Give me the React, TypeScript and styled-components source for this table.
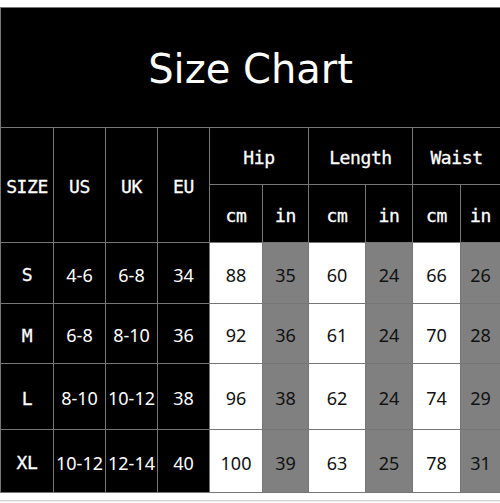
import React from "react";
import styled, { createGlobalStyle } from "styled-components";

const GlobalStyle = createGlobalStyle`
  html, body { margin: 0; padding: 0; background: #ffffff; }
  body { font-family: "DejaVu Sans", sans-serif; }
`;

const Page = styled.div`
  width: 500px;
  height: 503px;
  overflow: hidden;
  background: #ffffff;
  display: flex;
  flex-direction: column;
  padding-top: 7px;
  box-sizing: border-box;
`;

const Chart = styled.div`
  display: grid;
  grid-template-columns: 52px 51px 51px 51px 52px 45px 56px 46px 47px 39px;
  grid-template-rows: 119px 56px 57px 60px 59px 65px 62px;
  gap: 1px;
  padding: 1px 0 1px 1px;
  background: #767676;
  width: 500px;
  box-sizing: border-box;
`;

const Title = styled.div`
  grid-column: 1 / -1;
  background: #000;
  color: #fff;
  font-family: "DejaVu Sans", Verdana, sans-serif;
  font-size: 40px;
  display: flex;
  align-items: center;
  justify-content: center;
  padding-top: 2px;
`;

type Tone = "black" | "white" | "gray";

const Cell = styled.div<{ $tone?: Tone; $span?: number; $rows?: number; $mono?: boolean }>`
  display: flex;
  align-items: center;
  justify-content: center;
  white-space: nowrap;
  overflow: visible;
  padding-top: 3px;
  grid-column: span ${(p) => p.$span ?? 1};
  grid-row: span ${(p) => p.$rows ?? 1};
  background: ${(p) => (p.$tone === "white" ? "#ffffff" : p.$tone === "gray" ? "#808080" : "#000000")};
  color: ${(p) => (p.$tone === "white" || p.$tone === "gray" ? "#111111" : "#ffffff")};
  font-family: ${(p) => (p.$mono ? '"DejaVu Sans Mono", "Liberation Mono", monospace' : '"Noto Sans", sans-serif')};
  font-size: 18px;
  letter-spacing: ${(p) => (p.$mono ? "-0.4px" : "0")};
  -webkit-text-stroke: ${(p) => (p.$mono ? "0.3px #ffffff" : "0")};
`;

const Footer = styled.div`
  height: 7px;
  border-bottom: 1px solid #d4d4d4;
  box-shadow: 0 1px 1px #ececec;
`;

const rows = [
  { size: "S", us: "4-6", uk: "6-8", eu: "34", v: ["88", "35", "60", "24", "66", "26"] },
  { size: "M", us: "6-8", uk: "8-10", eu: "36", v: ["92", "36", "61", "24", "70", "28"] },
  { size: "L", us: "8-10", uk: "10-12", eu: "38", v: ["96", "38", "62", "24", "74", "29"] },
  { size: "XL", us: "10-12", uk: "12-14", eu: "40", v: ["100", "39", "63", "25", "78", "31"] },
];

export default function App() {
  return (
    <>
      <GlobalStyle />
      <Page>
        <Chart>
          <Title>Size Chart</Title>
          <Cell $mono $rows={2}>SIZE</Cell>
          <Cell $mono $rows={2}>US</Cell>
          <Cell $mono $rows={2}>UK</Cell>
          <Cell $mono $rows={2}>EU</Cell>
          <Cell $mono $span={2}>Hip</Cell>
          <Cell $mono $span={2}>Length</Cell>
          <Cell $mono $span={2}>Waist</Cell>
          <Cell $mono>cm</Cell>
          <Cell $mono>in</Cell>
          <Cell $mono>cm</Cell>
          <Cell $mono>in</Cell>
          <Cell $mono>cm</Cell>
          <Cell $mono>in</Cell>
          {rows.map((r) => (
            <React.Fragment key={r.size}>
              <Cell $mono>{r.size}</Cell>
              <Cell>{r.us}</Cell>
              <Cell>{r.uk}</Cell>
              <Cell>{r.eu}</Cell>
              {r.v.map((val, i) => (
                <Cell key={i} $tone={i % 2 === 0 ? "white" : "gray"}>
                  {val}
                </Cell>
              ))}
            </React.Fragment>
          ))}
        </Chart>
        <Footer />
      </Page>
    </>
  );
}
